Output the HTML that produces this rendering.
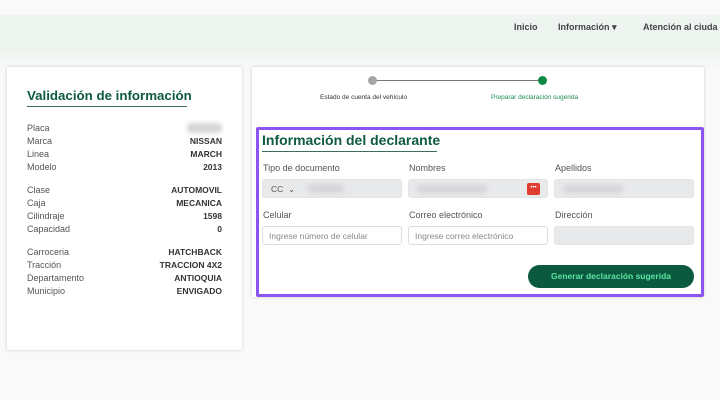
<!DOCTYPE html>
<html><head><meta charset="utf-8"><style>
*{margin:0;padding:0;box-sizing:border-box}
body{width:720px;height:400px;overflow:hidden;background:#f9f9f9;font-family:"Liberation Sans",sans-serif;position:relative;color:#333}
.a{position:absolute}
.nav{left:0;top:15px;width:720px;height:36px;background:#eef5f1}
.grad{left:0;top:51px;width:720px;height:20px;background:linear-gradient(#eff5f1,#f9f9f9)}
.nav span{position:absolute;top:7px;font-size:9px;font-weight:bold;color:#444}
.card{background:#fff;box-shadow:0 0 3px rgba(0,0,0,.18);border-radius:2px}
.row{position:absolute;left:27px;width:195px;font-size:9px;color:#555}
.row b{position:absolute;right:0;top:0;color:#333;font-size:8.5px}
.lbl{position:absolute;font-size:9px;color:#555}
.inp{position:absolute;height:19px;width:140px;border-radius:3px;background:#e8e9eb;border:1px solid #e3e4e6}
.inp.w{background:#fff;border:1px solid #ddd;font-size:8.5px;color:#888;padding:4px 6px}
.blur{position:absolute;background:#d5d6d8;border-radius:4px;filter:blur(2px)}
</style></head><body>
<div class="a nav"><span style="left:514px">Inicio</span><span style="left:558px">Información ▾</span><span style="left:643px;white-space:nowrap">Atención al ciuda</span></div>
<div class="a grad"></div>

<div class="a card" style="left:7px;top:67px;width:235px;height:283px"></div>
<div class="a" style="left:27px;top:88px;font-size:13.3px;font-weight:bold;color:#0e5a3f">Validación de información</div>
<div class="a" style="left:27px;top:106px;width:160px;height:1px;background:#3c6e58"></div>
<div class="row" style="top:123px">Placa<span class="blur" style="right:0;left:160px;top:0;width:35px;height:10px"></span></div>
<div class="row" style="top:136px">Marca<b>NISSAN</b></div>
<div class="row" style="top:149px">Linea<b>MARCH</b></div>
<div class="row" style="top:162px">Modelo<b>2013</b></div>
<div class="row" style="top:185px">Clase<b>AUTOMOVIL</b></div>
<div class="row" style="top:198px">Caja<b>MECANICA</b></div>
<div class="row" style="top:211px">Cilindraje<b>1598</b></div>
<div class="row" style="top:224px">Capacidad<b>0</b></div>
<div class="row" style="top:247px">Carroceria<b>HATCHBACK</b></div>
<div class="row" style="top:260px">Tracción<b>TRACCION 4X2</b></div>
<div class="row" style="top:273px">Departamento<b>ANTIOQUIA</b></div>
<div class="row" style="top:286px">Municipio<b>ENVIGADO</b></div>

<div class="a card" style="left:252px;top:67px;width:452px;height:230px"></div>
<div class="a" style="left:372px;top:80px;width:171px;height:1px;background:#777"></div>
<div class="a" style="left:368px;top:76px;width:9px;height:9px;border-radius:50%;background:#a5a5a5"></div>
<div class="a" style="left:538px;top:76px;width:9px;height:9px;border-radius:50%;background:#0c8a45"></div>
<div class="a" style="left:320px;top:94px;font-size:6.5px;color:#333">Estado de cuenta del vehículo</div>
<div class="a" style="left:491px;top:94px;font-size:6.5px;color:#1f8a55">Preparar declaración sugerida</div>

<div class="a" style="left:256px;top:127px;width:448px;height:170px;border:3px solid #8c55f2;border-radius:2px"></div>
<div class="a" style="left:262px;top:132px;font-size:14px;font-weight:bold;color:#0e5a3f">Información del declarante</div>
<div class="a" style="left:262px;top:151px;width:175px;height:1px;background:#3c6e58"></div>

<div class="lbl" style="left:263px;top:163px">Tipo de documento</div>
<div class="lbl" style="left:409px;top:163px">Nombres</div>
<div class="lbl" style="left:555px;top:163px">Apellidos</div>
<div class="inp" style="left:262px;top:179px"><span style="position:absolute;left:8px;top:4px;font-size:8.5px;color:#555">CC &nbsp;⌄</span><span class="blur" style="left:45px;top:4px;width:36px;height:9px"></span></div>
<div class="inp" style="left:408px;top:179px"><span class="blur" style="left:8px;top:5px;width:70px;height:8px"></span><span style="position:absolute;left:118px;top:3px;width:13px;height:12px;background:#e03c31;border-radius:2px;color:#fff;font-size:6px;text-align:center;line-height:11px">•••</span></div>
<div class="inp" style="left:554px;top:179px"><span class="blur" style="left:8px;top:5px;width:60px;height:8px"></span></div>

<div class="lbl" style="left:263px;top:210px">Celular</div>
<div class="lbl" style="left:409px;top:210px">Correo electrónico</div>
<div class="lbl" style="left:555px;top:210px">Dirección</div>
<div class="inp w" style="left:262px;top:226px">Ingrese número de celular</div>
<div class="inp w" style="left:408px;top:226px">Ingrese correo electrónico</div>
<div class="inp" style="left:554px;top:226px"></div>

<div class="a" style="left:528px;top:265px;width:166px;height:23px;border-radius:12px;background:#0b5a40;color:#5ce6a3;font-size:8.5px;font-weight:bold;text-align:center;line-height:23px">Generar declaración sugerida</div>
</body></html>
